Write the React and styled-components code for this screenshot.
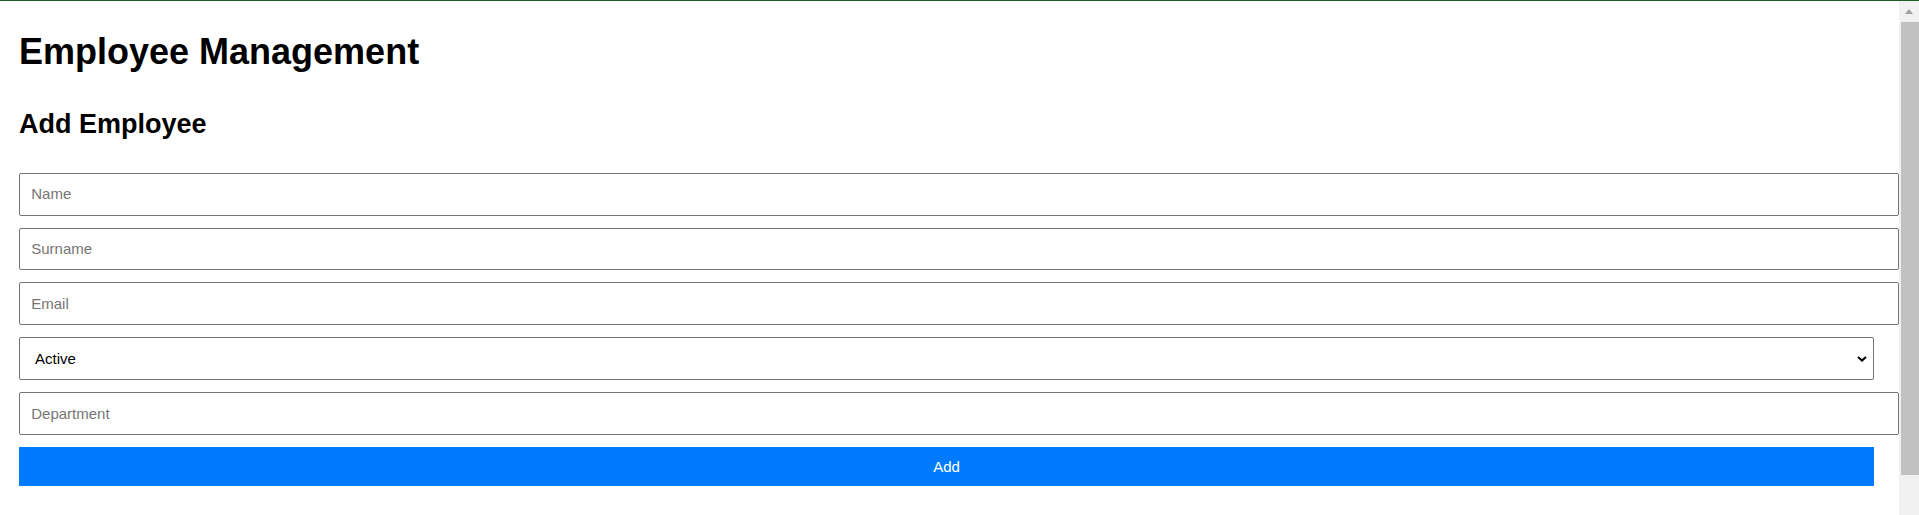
import React, { useState } from "react";
import styled, { createGlobalStyle } from "styled-components";

const GlobalStyle = createGlobalStyle`
  html {
    overflow: hidden;
  }
  body {
    margin: 0;
    border-top: 1px solid #1f5c22;
    background: #fff;
    font-family: "Liberation Sans", Arial, sans-serif;
    color: #000;
  }
`;

const Page = styled.div`
  margin-right: 20px;
  padding: 0 25px 0 19px;
`;

const Title = styled.h1`
  font-size: 36px;
  font-weight: bold;
  margin: 30px 0 36px;
`;

const SubTitle = styled.h2`
  font-size: 27px;
  font-weight: bold;
  margin: 0 0 33px;
`;

const Form = styled.form`
  display: flex;
  flex-direction: column;
  align-items: flex-start;
  gap: 12.2px;
`;

const Input = styled.input`
  box-sizing: content-box;
  width: 100%;
  height: 18px;
  margin: 0;
  padding: 11.25px;
  border: 1px solid #767676;
  border-radius: 2px;
  font-family: "Liberation Sans", Arial, sans-serif;
  font-size: 15px;
  line-height: 18px;
  color: #000;
  outline: none;

  &::placeholder {
    color: #757575;
  }
`;

const SelectWrap = styled.div`
  position: relative;
  width: 100%;
`;

const Select = styled.select`
  appearance: none;
  box-sizing: border-box;
  width: 100%;
  height: 43px;
  margin: 0;
  padding: 0 30px 0 15px;
  border: 1px solid #767676;
  border-radius: 2px;
  background: #fff;
  font-family: "Liberation Sans", Arial, sans-serif;
  font-size: 15px;
  color: #000;
  outline: none;
`;

const Chevron = styled.svg`
  position: absolute;
  right: 7px;
  top: 19px;
  pointer-events: none;
`;

const Button = styled.button`
  box-sizing: border-box;
  width: 100%;
  height: 38.7px;
  margin: 0;
  border: none;
  border-radius: 0;
  background: #007bff;
  color: #fff;
  font-family: "Liberation Sans", Arial, sans-serif;
  font-size: 15px;
  cursor: pointer;
`;

const ScrollTrack = styled.div`
  position: fixed;
  top: 1px;
  right: 0;
  bottom: 0;
  width: 20px;
  background: #f1f1f1;
  display: flex;
  flex-direction: column;
`;

const ScrollArrow = styled.div`
  height: 21px;
  display: flex;
  align-items: center;
  justify-content: center;
`;

const ScrollThumb = styled.div`
  margin-left: 2px;
  width: 18px;
  height: 453px;
  background: #c1c1c1;
`;

function App() {
  const [status, setStatus] = useState("active");

  return (
    <>
      <GlobalStyle />
      <Page>
        <Title>Employee Management</Title>
        <SubTitle>Add Employee</SubTitle>
        <Form onSubmit={(e) => e.preventDefault()}>
          <Input type="text" placeholder="Name" />
          <Input type="text" placeholder="Surname" />
          <Input type="email" placeholder="Email" />
          <SelectWrap>
            <Select value={status} onChange={(e) => setStatus(e.target.value)}>
              <option value="active">Active</option>
              <option value="inactive">Inactive</option>
            </Select>
            <Chevron width="10" height="6" viewBox="0 0 10 6">
              <path d="M1 1 L5 4.6 L9 1" fill="none" stroke="#000" strokeWidth="2" />
            </Chevron>
          </SelectWrap>
          <Input type="text" placeholder="Department" />
          <Button type="submit">Add</Button>
        </Form>
      </Page>
      <ScrollTrack>
        <ScrollArrow>
          <svg width="8" height="5" viewBox="0 0 8 5">
            <polygon points="0,5 8,5 4,0" fill="#a3a3a3" />
          </svg>
        </ScrollArrow>
        <ScrollThumb />
      </ScrollTrack>
    </>
  );
}

export default App;
